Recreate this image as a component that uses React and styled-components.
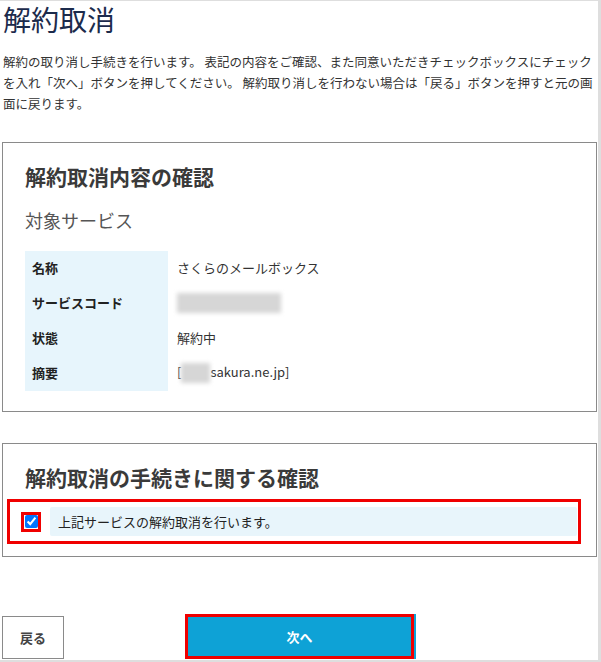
import React from 'react'
import styled, { createGlobalStyle } from 'styled-components'

const GlobalStyle = createGlobalStyle`
  html, body {
    margin: 0;
    padding: 0;
    background: #fff;
  }
  body {
    font-family: "Noto Sans CJK JP", "Liberation Sans", sans-serif;
    color: #333;
  }
`

export default function App() {
  const rows = [
    { label: '名称', value: 'さくらのメールボックス' },
    { label: 'サービスコード', value: <BlurBox $w={104} $h={20} /> },
    { label: '状態', value: '解約中' },
    { label: '摘要', value: <>[<BlurBox $w={29} $h={20} />sakura.ne.jp]</> },
  ]

  return (
    <>
      <GlobalStyle />
      <Frame>
        <Title>解約取消</Title>
        <Lead>
          解約の取り消し手続きを行います。 表記の内容をご確認、また同意いただきチェックボックスにチェック<br />
          を入れ「次へ」ボタンを押してください。 解約取り消しを行わない場合は「戻る」ボタンを押すと元の画<br />
          面に戻ります。
        </Lead>

        <Panel>
          <PanelTitle>解約取消内容の確認</PanelTitle>
          <SubTitle>対象サービス</SubTitle>
          <InfoTable>
            <tbody>
              {rows.map(r => (
                <tr key={r.label}>
                  <Th>{r.label}</Th>
                  <Td>{r.value}</Td>
                </tr>
              ))}
            </tbody>
          </InfoTable>
        </Panel>

        <Panel $agree>
          <PanelTitle $indent={18}>解約取消の手続きに関する確認</PanelTitle>
          <Highlight>
            <CheckMark>
              <Check type="checkbox" checked readOnly />
            </CheckMark>
            <AgreeLabel>上記サービスの解約取消を行います。</AgreeLabel>
          </Highlight>
        </Panel>

        <Actions>
          <BackButton>戻る</BackButton>
          <NextButton>次へ</NextButton>
        </Actions>
      </Frame>
    </>
  )
}

const Frame = styled.div`
  width: 601px;
  height: 662px;
  box-sizing: border-box;
  overflow: hidden;
  border-top: 1px solid #dedede;
  border-right: 3px solid #dedede;
  border-bottom: 2px solid #dedede;
  padding-left: 2px;
`
const Title = styled.h1`
  margin: 0;
  padding-left: 1px;
  font-size: 28px;
  line-height: 36px;
  font-weight: 400;
  color: #1c2b4c;
`
const Lead = styled.p`
  margin: 14px 0 0;
  padding-left: 1px;
  font-size: 12.5px;
  line-height: 21px;
  color: #333;
  white-space: nowrap;
`
const Panel = styled.section`
  margin: ${p => (p.$agree ? '31px' : '28px')} 1px 0 0;
  border: 1px solid #8a8a8a;
  padding: ${p => (p.$agree ? '18px 15px 12px 4px' : '18px 22px 20px 22px')};
`
const PanelTitle = styled.h2`
  margin: 0;
  padding-left: ${p => p.$indent || 0}px;
  font-size: 21px;
  line-height: 30px;
  font-weight: 700;
  color: #3a3a3a;
`
const SubTitle = styled.h3`
  margin: 16px 0 18px;
  font-size: 18px;
  line-height: 26px;
  font-weight: 400;
  color: #555;
`
const InfoTable = styled.table`
  border-collapse: collapse;
  border-spacing: 0;
`
const Th = styled.th`
  width: 143px;
  height: 35px;
  box-sizing: border-box;
  padding: 0 0 2px 7px;
  background: #e7f5fc;
  text-align: left;
  font-size: 13px;
  font-weight: 700;
  color: #222;
`
const Td = styled.td`
  height: 35px;
  box-sizing: border-box;
  padding: 0 0 2px 9px;
  font-size: 13px;
  color: #333;
  white-space: nowrap;
`
const BlurBox = styled.span`
  display: inline-block;
  vertical-align: middle;
  width: ${p => p.$w}px;
  height: ${p => p.$h}px;
  background: #d6d6d6;
  filter: blur(2px);
`
const Highlight = styled.div`
  display: flex;
  align-items: center;
  gap: 9px;
  height: 45px;
  box-sizing: border-box;
  margin-top: 7px;
  border: 3px solid #f00000;
  padding: 0 1px 0 11px;
`
const CheckMark = styled.span`
  display: flex;
  align-items: center;
  justify-content: center;
  width: 20px;
  height: 20px;
  box-sizing: border-box;
  border: 3px solid #f00000;
  flex: none;
`
const Check = styled.input`
  margin: 0;
  width: 13px;
  height: 13px;
`
const AgreeLabel = styled.div`
  flex: 1;
  height: 29px;
  display: flex;
  align-items: center;
  padding: 0 0 1px 8px;
  box-sizing: border-box;
  background: #e8f5fb;
  border-radius: 2px;
  font-size: 13px;
  color: #222;
`
const Actions = styled.div`
  display: flex;
  align-items: flex-end;
  gap: 121px;
  margin-top: 57px;
`
const BackButton = styled.button`
  width: 62px;
  height: 43px;
  box-sizing: border-box;
  border: 1px solid #8a8a8a;
  background: #fff;
  font-family: inherit;
  font-size: 13px;
  font-weight: 700;
  color: #444;
  padding: 0 0 1px;
`
const NextButton = styled.button`
  width: 229px;
  height: 45px;
  box-sizing: border-box;
  border: 3px solid #f00000;
  background: #0ea2d6;
  box-shadow: 2px 0 0 #0ea2d6;
  font-family: inherit;
  font-size: 13px;
  font-weight: 700;
  color: #fff;
  padding: 0 0 1px;
`
